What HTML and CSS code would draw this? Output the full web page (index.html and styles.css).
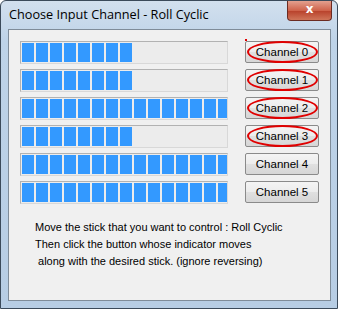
FILE: index.html
```html
<!DOCTYPE html>
<html>
<head>
  <link rel="stylesheet" href="styles.css">
  <title>Choose Input Channel</title>
</head>
<body>
  <div class="window">
    <div class="titlebar">
      <span class="title">Choose Input Channel - Roll Cyclic</span>
      <span class="close">x</span>
    </div>
    <div class="client">
      <div class="row">
        <div class="bar"><div class="fill" style="width:110px"></div></div>
        <button class="chan marked first">Channel 0</button>
      </div>
      <div class="row">
        <div class="bar"><div class="fill" style="width:110px"></div></div>
        <button class="chan marked">Channel 1</button>
      </div>
      <div class="row">
        <div class="bar"><div class="fill" style="width:100%"></div></div>
        <button class="chan marked">Channel 2</button>
      </div>
      <div class="row">
        <div class="bar"><div class="fill" style="width:110px"></div></div>
        <button class="chan marked">Channel 3</button>
      </div>
      <div class="row">
        <div class="bar"><div class="fill" style="width:100%"></div></div>
        <button class="chan">Channel 4</button>
      </div>
      <div class="row">
        <div class="bar"><div class="fill" style="width:100%"></div></div>
        <button class="chan">Channel 5</button>
      </div>
      <p class="help">Move the stick that you want to control : Roll Cyclic<br>Then click the button whose indicator moves<br>&nbsp;along with the desired stick. (ignore reversing)</p>
    </div>
  </div>
</body>
</html>
```

FILE: styles.css
```css
body {
  margin: 0;
  background: #ffffff;
}
.window {
  width: 336px;
  height: 307px;
  border: 1px solid #3b4a5a;
  border-radius: 6px 6px 0 0;
  background: linear-gradient(#d2e0ee, #bed3e8 40px, #b7cde4);
  display: flex;
  flex-direction: column;
}
.titlebar {
  height: 28px;
  display: flex;
  justify-content: space-between;
  align-items: flex-start;
}
.title {
  font-family: "Open Sans", sans-serif;
  font-size: 12.7px;
  color: #000;
  margin: 4px 0 0 8px;
}
.close {
  width: 43px;
  height: 19px;
  margin-right: 5px;
  border: 1px solid #6b2b22;
  border-top: none;
  border-radius: 0 0 4px 4px;
  background: linear-gradient(#e3a08f, #cf634b 50%, #b8402a 51%, #cf7559);
  color: #fff;
  font-family: "DejaVu Sans", sans-serif;
  font-weight: bold;
  font-size: 12px;
  text-align: center;
  line-height: 17px;
}
.client {
  margin: 0 6px 7px 7px;
  flex: 1;
  background: #f0f0f0;
  border: 1px solid #7f8c99;
  padding: 8px 0 0 11px;
}
.row {
  display: flex;
  align-items: center;
  height: 28px;
}
.bar {
  width: 205px;
  height: 20px;
  border: 1px solid #bcbcbc;
  border-color: #b2b2b2 #d8d8d8 #d8d8d8 #b2b2b2;
  background: #ececec;
  overflow: hidden;
  padding: 1px 0 0 1px;
  box-sizing: content-box;
}
.fill {
  height: 19px;
  background: repeating-linear-gradient(90deg, #3399ff 0 12px, transparent 12px 14px);
}
.chan {
  position: relative;
  margin-left: 17px;
  width: 74px;
  height: 22px;
  font-family: "Liberation Sans", sans-serif;
  font-size: 11.5px;
  color: #000;
  background: linear-gradient(#f4f4f4, #ececec 50%, #e0e0e0 51%, #d6d6d6);
  border: 1px solid #8a8a8a;
  border-radius: 2px;
  padding: 0;
}
.marked::after {
  content: "";
  position: absolute;
  left: 1px;
  right: 0;
  top: -1px;
  bottom: -1px;
  border: 2px solid #e00000;
  border-radius: 50%;
}
.first::before {
  content: "";
  position: absolute;
  left: -1px;
  top: -3px;
  width: 2px;
  height: 2px;
  background: #e00000;
}
.help {
  margin: 13px 0 0 15px;
  font-family: "Liberation Sans", sans-serif;
  font-size: 11px;
  line-height: 17px;
  color: #000;
}
```
